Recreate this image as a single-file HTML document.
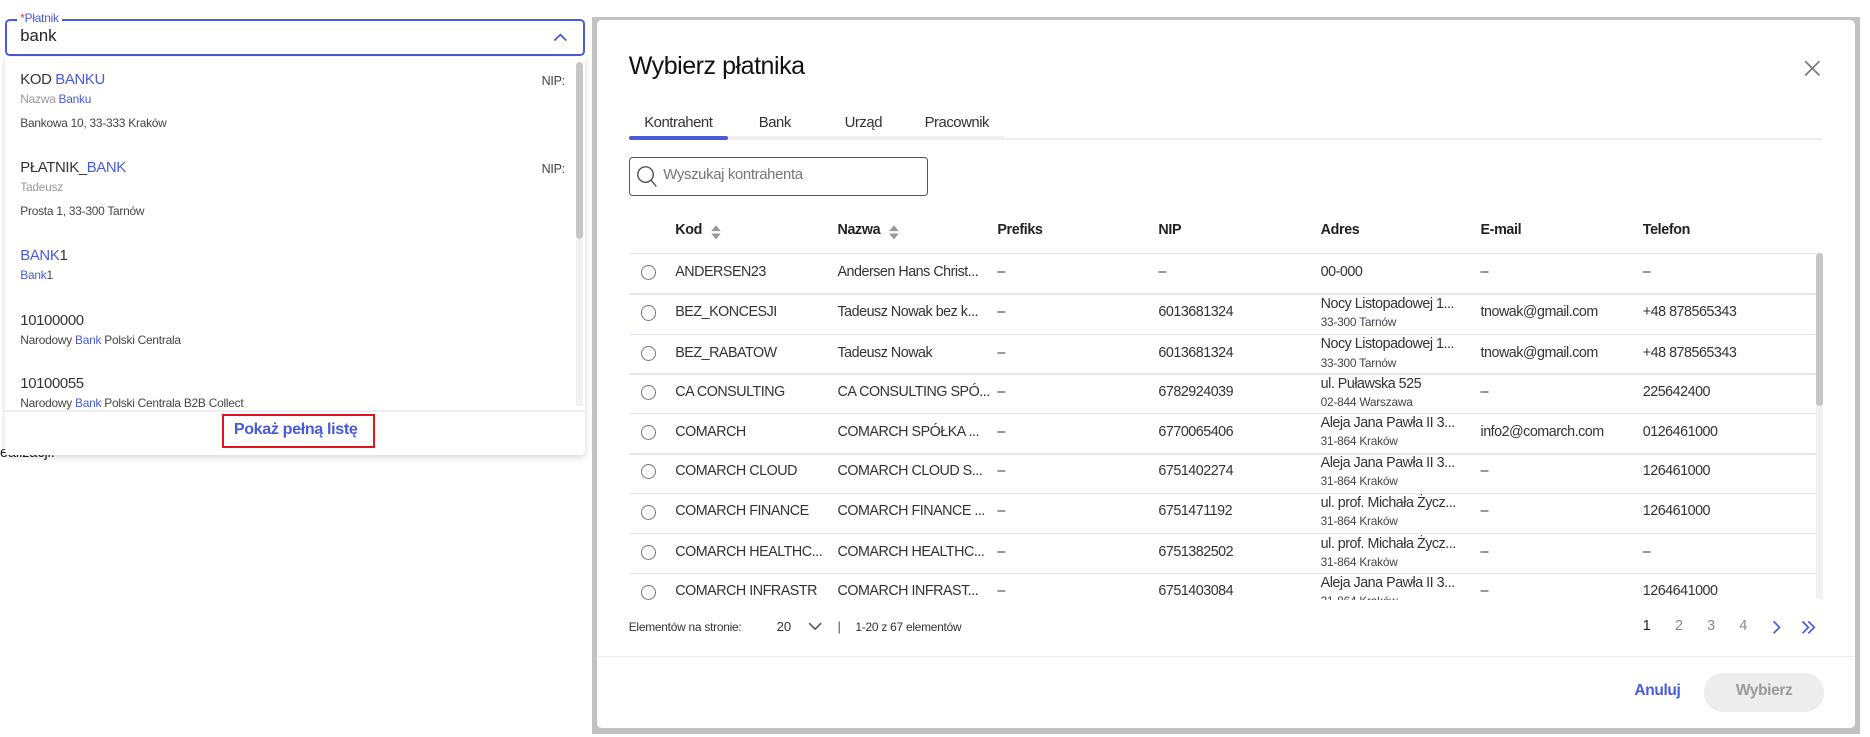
<!DOCTYPE html>
<html><head><meta charset="utf-8"><style>
html,body{margin:0;padding:0;background:#fff;overflow:hidden}
body{width:1870px;height:737px}
#w{zoom:1.193;position:relative;width:1568px;height:618px;font-family:"Liberation Sans",sans-serif;color:#333}
.a{position:absolute;white-space:nowrap}
.b{color:#4a5bd6}
.t{font-size:12.5px;letter-spacing:-.3px;color:#333}
.s{font-size:10px;letter-spacing:-.2px;color:#444}
.h{font-size:12px;font-weight:bold;color:#222;letter-spacing:-.3px}
.c{font-size:12px;letter-spacing:-.4px;color:#333}
.ln{position:absolute;left:527px;width:995px;height:1px;background:#e4e6f2}
.rd{position:absolute;left:537px;width:11px;height:11px;border:1px solid #777;border-radius:50%}
</style></head><body><div id="w">
<div class="a" style="left:0;top:373px;font-size:12px;color:#222">ealizacji.</div>
<div class="a" style="left:4px;top:16px;width:483px;height:28px;border:2px solid #4a5bd6;border-radius:4px"></div>
<div class="a" style="left:14px;top:9px;background:#fff;padding:0 3px;font-size:10px;color:#4a5bd6;letter-spacing:-.2px"><span style="color:#e53935">*</span>Płatnik</div>
<div class="a" style="left:17px;top:22px;font-size:14px;color:#222">bank</div>
<svg class="a" style="left:463px;top:26px" width="14" height="10"><path d="M2 8 L7 3 L12 8" fill="none" stroke="#4a5bd6" stroke-width="1.5"/></svg>
<div class="a" style="left:4px;top:48px;width:486px;height:333px;background:#fff;box-shadow:0 2px 6px rgba(0,0,0,.15);border-radius:0 0 4px 4px"></div>
<div class="a" style="left:483px;top:52px;width:6px;height:148px;background:#c6c6c6;border-radius:3px"></div>
<div class="a" style="left:483px;top:200px;width:6px;height:140px;background:#f1f1f1"></div>
<div class="a t" style="left:17px;top:60px">KOD <span class="b">BANKU</span></div>
<div class="a s" style="left:454px;top:62px;font-size:10.5px">NIP:</div>
<div class="a s" style="left:17px;top:77px;color:#999">Nazwa <span class="b">Banku</span></div>
<div class="a s" style="left:17px;top:97px">Bankowa 10, 33-333 Kraków</div>
<div class="a t" style="left:17px;top:134px">PŁATNIK_<span class="b">BANK</span></div>
<div class="a s" style="left:454px;top:136px;font-size:10.5px">NIP:</div>
<div class="a s" style="left:17px;top:151px;color:#999">Tadeusz</div>
<div class="a s" style="left:17px;top:171px">Prosta 1, 33-300 Tarnów</div>
<div class="a t" style="left:17px;top:208px"><span class="b">BANK</span>1</div>
<div class="a s" style="left:17px;top:225px"><span class="b">Bank</span>1</div>
<div class="a t" style="left:17px;top:262px">10100000</div>
<div class="a s" style="left:17px;top:279px">Narodowy <span class="b">Bank</span> Polski Centrala</div>
<div class="a t" style="left:17px;top:315px">10100055</div>
<div class="a s" style="left:17px;top:332px">Narodowy <span class="b">Bank</span> Polski Centrala B2B Collect</div>
<div class="a" style="left:4px;top:344px;width:486px;height:1px;background:#eee"></div>
<div class="a" style="left:186px;top:347px;width:125px;height:25px;border:2px solid #e0141e"></div>
<div class="a" style="left:196px;top:352px;font-size:13.5px;font-weight:bold;color:#4a5bd6;letter-spacing:-.3px">Pokaż pełną listę</div>
<div class="a" style="left:496px;top:14px;width:1063px;height:601px;background:#c2c2c2"></div>
<div class="a" style="left:500px;top:17px;width:1055px;height:593px;background:#fff;border-radius:4px"></div>
<div class="a" style="left:527px;top:44px;font-size:21px;color:#111;letter-spacing:-.4px">Wybierz płatnika</div>
<svg class="a" style="left:1512px;top:50px" width="14" height="14"><path d="M1 1L13 13M13 1L1 13" stroke="#777" stroke-width="1.4"/></svg>
<div class="a c" style="left:540px;top:96px;font-size:12.5px">Kontrahent</div>
<div class="a c" style="left:636px;top:96px;font-size:12.5px">Bank</div>
<div class="a c" style="left:708px;top:96px;font-size:12.5px">Urząd</div>
<div class="a c" style="left:775px;top:96px;font-size:12.5px">Pracownik</div>
<div class="a" style="left:527px;top:116px;width:1000px;height:1px;background:#eee"></div>
<div class="a" style="left:527px;top:114px;width:315px;height:3px;background:#efefef"></div>
<div class="a" style="left:527px;top:114px;width:83px;height:3px;background:#4a5bd6;border-radius:2px"></div>
<div class="a" style="left:527px;top:132px;width:249px;height:31px;border:1px solid #555;border-radius:3px"></div>
<svg class="a" style="left:533px;top:138px" width="20" height="20"><circle cx="8" cy="8" r="6.5" fill="none" stroke="#555" stroke-width="1.2"/><path d="M12.5 12.5L17 18" stroke="#555" stroke-width="1.2"/></svg>
<div class="a" style="left:556px;top:140px;font-size:12.5px;color:#777;letter-spacing:-.3px">Wyszukaj kontrahenta</div>
<div class="a h" style="left:566px;top:186px">Kod</div>
<svg class="a" style="left:595px;top:188px" width="10" height="14"><path d="M1 6L5 1L9 6Z M1 8L5 13L9 8Z" fill="#999"/></svg>
<div class="a h" style="left:702px;top:186px">Nazwa</div>
<svg class="a" style="left:744px;top:188px" width="10" height="14"><path d="M1 6L5 1L9 6Z M1 8L5 13L9 8Z" fill="#999"/></svg>
<div class="a h" style="left:836px;top:186px">Prefiks</div>
<div class="a h" style="left:971px;top:186px">NIP</div>
<div class="a h" style="left:1107px;top:186px">Adres</div>
<div class="a h" style="left:1241px;top:186px">E-mail</div>
<div class="a h" style="left:1377px;top:186px">Telefon</div>
<div class="ln" style="top:212px"></div>
<div class="a" style="left:1522px;top:212px;width:6px;height:290px;background:#f1f1f1"></div>
<div class="a" style="left:1522px;top:212px;width:6px;height:128px;background:#c6c6c6;border-radius:3px"></div>
<div class="a" style="left:527px;top:213px;width:995px;height:290px;overflow:hidden">
<div style="position:relative;left:-527px;top:-213px;width:1522px;height:520px">
<div class="rd" style="top:222px"></div><div class="a c" style="left:566px;top:221px">ANDERSEN23</div><div class="a c" style="left:702px;top:221px">Andersen Hans Christ...</div><div class="a c" style="left:836px;top:221px">–</div><div class="a c" style="left:971px;top:221px">–</div><div class="a c" style="left:1107px;top:221px">00-000</div><div class="a c" style="left:1241px;top:221px">–</div><div class="a c" style="left:1377px;top:221px">–</div>
<div class="ln" style="top:246px"></div>
<div class="rd" style="top:256px"></div><div class="a c" style="left:566px;top:255px">BEZ_KONCESJI</div><div class="a c" style="left:702px;top:255px">Tadeusz Nowak bez k...</div><div class="a c" style="left:836px;top:255px">–</div><div class="a c" style="left:971px;top:255px">6013681324</div><div class="a c" style="left:1107px;top:248px">Nocy Listopadowej 1...</div><div class="a s" style="left:1107px;top:264px">33-300 Tarnów</div><div class="a c" style="left:1241px;top:255px">tnowak@gmail.com</div><div class="a c" style="left:1377px;top:255px">+48 878565343</div>
<div class="ln" style="top:280px"></div>
<div class="rd" style="top:290px"></div><div class="a c" style="left:566px;top:289px">BEZ_RABATOW</div><div class="a c" style="left:702px;top:289px">Tadeusz Nowak</div><div class="a c" style="left:836px;top:289px">–</div><div class="a c" style="left:971px;top:289px">6013681324</div><div class="a c" style="left:1107px;top:282px">Nocy Listopadowej 1...</div><div class="a s" style="left:1107px;top:298px">33-300 Tarnów</div><div class="a c" style="left:1241px;top:289px">tnowak@gmail.com</div><div class="a c" style="left:1377px;top:289px">+48 878565343</div>
<div class="ln" style="top:313px"></div>
<div class="rd" style="top:323px"></div><div class="a c" style="left:566px;top:322px">CA CONSULTING</div><div class="a c" style="left:702px;top:322px">CA CONSULTING SPÓ...</div><div class="a c" style="left:836px;top:322px">–</div><div class="a c" style="left:971px;top:322px">6782924039</div><div class="a c" style="left:1107px;top:315px">ul. Puławska 525</div><div class="a s" style="left:1107px;top:331px">02-844 Warszawa</div><div class="a c" style="left:1241px;top:322px">–</div><div class="a c" style="left:1377px;top:322px">225642400</div>
<div class="ln" style="top:346px"></div>
<div class="rd" style="top:356px"></div><div class="a c" style="left:566px;top:355px">COMARCH</div><div class="a c" style="left:702px;top:355px">COMARCH SPÓŁKA ...</div><div class="a c" style="left:836px;top:355px">–</div><div class="a c" style="left:971px;top:355px">6770065406</div><div class="a c" style="left:1107px;top:348px">Aleja Jana Pawła II 3...</div><div class="a s" style="left:1107px;top:364px">31-864 Kraków</div><div class="a c" style="left:1241px;top:355px">info2@comarch.com</div><div class="a c" style="left:1377px;top:355px">0126461000</div>
<div class="ln" style="top:380px"></div>
<div class="rd" style="top:389px"></div><div class="a c" style="left:566px;top:388px">COMARCH CLOUD</div><div class="a c" style="left:702px;top:388px">COMARCH CLOUD S...</div><div class="a c" style="left:836px;top:388px">–</div><div class="a c" style="left:971px;top:388px">6751402274</div><div class="a c" style="left:1107px;top:381px">Aleja Jana Pawła II 3...</div><div class="a s" style="left:1107px;top:397px">31-864 Kraków</div><div class="a c" style="left:1241px;top:388px">–</div><div class="a c" style="left:1377px;top:388px">126461000</div>
<div class="ln" style="top:413px"></div>
<div class="rd" style="top:423px"></div><div class="a c" style="left:566px;top:422px">COMARCH FINANCE</div><div class="a c" style="left:702px;top:422px">COMARCH FINANCE ...</div><div class="a c" style="left:836px;top:422px">–</div><div class="a c" style="left:971px;top:422px">6751471192</div><div class="a c" style="left:1107px;top:415px">ul. prof. Michała Życz...</div><div class="a s" style="left:1107px;top:431px">31-864 Kraków</div><div class="a c" style="left:1241px;top:422px">–</div><div class="a c" style="left:1377px;top:422px">126461000</div>
<div class="ln" style="top:447px"></div>
<div class="rd" style="top:457px"></div><div class="a c" style="left:566px;top:456px">COMARCH HEALTHC...</div><div class="a c" style="left:702px;top:456px">COMARCH HEALTHC...</div><div class="a c" style="left:836px;top:456px">–</div><div class="a c" style="left:971px;top:456px">6751382502</div><div class="a c" style="left:1107px;top:449px">ul. prof. Michała Życz...</div><div class="a s" style="left:1107px;top:465px">31-864 Kraków</div><div class="a c" style="left:1241px;top:456px">–</div><div class="a c" style="left:1377px;top:456px">–</div>
<div class="ln" style="top:480px"></div>
<div class="rd" style="top:490px"></div><div class="a c" style="left:566px;top:489px">COMARCH INFRASTR</div><div class="a c" style="left:702px;top:489px">COMARCH INFRAST...</div><div class="a c" style="left:836px;top:489px">–</div><div class="a c" style="left:971px;top:489px">6751403084</div><div class="a c" style="left:1107px;top:482px">Aleja Jana Pawła II 3...</div><div class="a s" style="left:1107px;top:498px">31-864 Kraków</div><div class="a c" style="left:1241px;top:489px">–</div><div class="a c" style="left:1377px;top:489px">1264641000</div>
</div></div>
<div class="a" style="left:527px;top:520px;font-size:10px;color:#333;letter-spacing:-.2px">Elementów na stronie:</div>
<div class="a" style="left:651px;top:519px;font-size:11px;color:#333">20</div>
<svg class="a" style="left:677px;top:521px" width="12" height="8"><path d="M1 1L6 6L11 1" fill="none" stroke="#555" stroke-width="1.3"/></svg>
<div class="a" style="left:702px;top:519px;font-size:11px;color:#555">|</div>
<div class="a" style="left:717px;top:520px;font-size:10px;color:#333;letter-spacing:-.2px">1-20 z 67 elementów</div>
<div class="a" style="left:1377px;top:518px;font-size:12px;color:#222">1</div>
<div class="a" style="left:1404px;top:518px;font-size:12px;color:#888">2</div>
<div class="a" style="left:1431px;top:518px;font-size:12px;color:#888">3</div>
<div class="a" style="left:1458px;top:518px;font-size:12px;color:#888">4</div>
<svg class="a" style="left:1484px;top:519px" width="10" height="14"><path d="M3 2L8 7L3 12" fill="none" stroke="#4a5bd6" stroke-width="1.4"/></svg>
<svg class="a" style="left:1509px;top:519px" width="14" height="14"><path d="M2 2L7 7L2 12M7 2L12 7L7 12" fill="none" stroke="#4a5bd6" stroke-width="1.4"/></svg>
<div class="a" style="left:500px;top:550px;width:1055px;height:1px;background:#eee"></div>
<div class="a" style="left:1370px;top:572px;font-size:13px;font-weight:bold;color:#4a5bd6;letter-spacing:-.3px">Anuluj</div>
<div class="a" style="left:1428px;top:564px;width:101px;height:33px;background:#ededed;border-radius:16px"></div>
<div class="a" style="left:1455px;top:572px;font-size:13px;font-weight:bold;color:#9a9a9a;letter-spacing:-.3px">Wybierz</div>
</div></body></html>
